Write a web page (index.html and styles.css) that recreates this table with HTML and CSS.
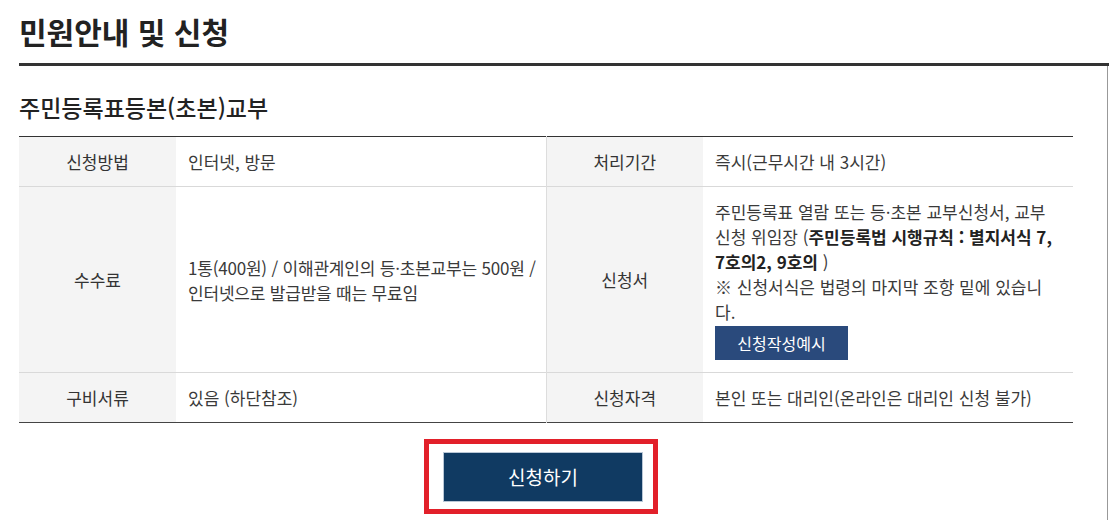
FILE: index.html
```html
<!DOCTYPE html>
<html lang="ko">
<head>
  <meta charset="UTF-8" />
  <meta name="viewport" content="width=device-width, initial-scale=1.0" />
  <title>민원안내 및 신청</title>
  <link rel="stylesheet" href="styles.css">
</head>
<body>
  <div class="page">
    <h1 class="page-title">민원안내 및 신청</h1>

    <div class="content">
      <h2 class="sub-title">주민등록표등본(초본)교부</h2>

      <table class="info-table">
        <colgroup>
          <col class="col-th">
          <col class="col-td">
          <col class="col-th">
          <col class="col-td">
        </colgroup>
        <tr>
          <th>신청방법</th>
          <td>인터넷, 방문</td>
          <th class="sep">처리기간</th>
          <td>즉시(근무시간 내 3시간)</td>
        </tr>
        <tr>
          <th>수수료</th>
          <td class="fee">1통(400원) / 이해관계인의 등·초본교부는 500원 / 인터넷으로 발급받을 때는 무료임</td>
          <th class="sep">신청서</th>
          <td>
            주민등록표 열람 또는 등·초본 교부신청서, 교부 신청 위임장 (<b>주민등록법 시행규칙 : 별지서식 7, 7호의2, 9호의</b> )<br>
            ※ 신청서식은 법령의 마지막 조항 밑에 있습니다.<br>
            <a href="#" class="btn-sample">신청작성예시</a>
          </td>
        </tr>
        <tr>
          <th>구비서류</th>
          <td>있음 (하단참조)</td>
          <th class="sep">신청자격</th>
          <td>본인 또는 대리인(온라인은 대리인 신청 불가)</td>
        </tr>
      </table>

      <div class="apply-wrap">
        <div class="apply-box">
          <a href="#" class="btn-apply">신청하기</a>
        </div>
      </div>
    </div>
  </div>
</body>
</html>
```

FILE: styles.css
```css
body {
  margin: 0;
  font-family: "Noto Sans CJK KR", "Noto Sans", sans-serif;
  color: #333;
  background: #fff;
}

.page {
  padding-left: 19px;
}

.page-title {
  margin: 0;
  padding: 11px 0 12px 0;
  font-size: 30px;
  line-height: 40px;
  font-weight: 700;
  color: #222;
  border-bottom: 3px solid #333;
}

.content {
  margin-right: 1px;
  padding-right: 34px;
  padding-bottom: 20px;
  border-right: 1px solid #999;
}

.sub-title {
  margin: 0;
  padding: 26px 0 14px 0;
  font-size: 23px;
  line-height: 30px;
  font-weight: 500;
  color: #222;
}

.info-table {
  width: 100%;
  border-collapse: collapse;
  table-layout: fixed;
  border-top: 1px solid #333;
  border-bottom: 1px solid #444;
  font-size: 17px;
  line-height: 25px;
}

.col-th {
  width: 157px;
}

.info-table tr + tr th,
.info-table tr + tr td {
  border-top: 1px solid #d9d9d9;
}

.info-table th {
  background: #f4f4f4;
  font-weight: normal;
  color: #333;
  text-align: center;
  padding: 12px 10px;
}

.info-table th.sep {
  border-left: 1px solid #ddd;
}

.info-table td {
  padding: 12px 5px 12px 12px;
  color: #3a3a3a;
  vertical-align: middle;
}

.info-table td.fee {
  padding-right: 0;
  letter-spacing: -0.2px;
}

.info-table td:last-child {
  padding-right: 16px;
}

.info-table td b {
  color: #222;
}

.btn-sample {
  display: inline-block;
  margin-top: 2px;
  width: 133px;
  height: 34px;
  line-height: 34px;
  text-align: center;
  background: #2a4a7c;
  color: #fff;
  font-size: 16px;
  text-decoration: none;
  vertical-align: top;
}

.apply-wrap {
  display: flex;
  justify-content: center;
  padding: 16px 10px 0 0;
}

.apply-box {
  border: 5px solid #e2202a;
  padding: 8px 10px 7px 14px;
}

.btn-apply {
  display: block;
  width: 198px;
  height: 48px;
  line-height: 48px;
  text-align: center;
  background: #103a62;
  border: 1px solid #b9c7d6;
  color: #fff;
  font-size: 19px;
  text-decoration: none;
}
```
